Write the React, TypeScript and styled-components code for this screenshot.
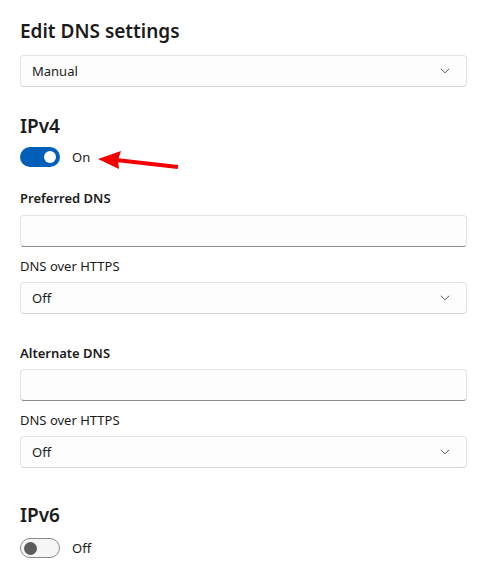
import React from "react";
import styled, { createGlobalStyle } from "styled-components";

const Global = createGlobalStyle`
  html, body { margin: 0; padding: 0; background: #ffffff; }
  body { font-family: "Segoe UI", "Noto Sans", "Open Sans", sans-serif; color: #1b1b1b; }
  * { box-sizing: border-box; }
`;

const Page = styled.div`
  position: relative;
  width: 477px;
  height: 577px;
  padding: 17px 10px 0 20px;
  display: flex;
  flex-direction: column;
  overflow: hidden;
`;

const Heading = styled.div<{ $mt?: number }>`
  font-size: 19px;
  font-weight: 600;
  line-height: 28px;
  height: 28px;
  margin-top: ${(p) => p.$mt ?? 0}px;
`;

const Label = styled.div<{ $mt: number; $bold?: boolean }>`
  font-size: 13px;
  line-height: 20px;
  height: 20px;
  font-weight: ${(p) => (p.$bold ? 600 : 400)};
  margin-top: ${(p) => p.$mt}px;
`;

const Select = styled.div<{ $mt: number }>`
  margin-top: ${(p) => p.$mt}px;
  height: 32px;
  border: 1px solid #e3e3e3;
  border-bottom-color: #d4d4d4;
  border-radius: 4px;
  background: #fdfdfd;
  display: flex;
  align-items: center;
  justify-content: space-between;
  padding: 0 16px 0 11px;
  font-size: 13px;
`;

const Input = styled.div<{ $mt: number }>`
  margin-top: ${(p) => p.$mt}px;
  height: 32px;
  border: 1px solid #e3e3e3;
  border-bottom: 1px solid #8a8a8a;
  border-radius: 4px;
  background: #fdfdfd;
`;

const ToggleRow = styled.div<{ $mt: number }>`
  margin-top: ${(p) => p.$mt}px;
  height: 20px;
  display: flex;
  align-items: center;
  gap: 12px;
  font-size: 13px;
`;

const Track = styled.div<{ $on: boolean }>`
  width: 40px;
  height: 20px;
  border-radius: 10px;
  display: flex;
  align-items: center;
  padding: 0 ${(p) => (p.$on ? 4 : 3)}px;
  justify-content: ${(p) => (p.$on ? "flex-end" : "flex-start")};
  background: ${(p) => (p.$on ? "#005fb8" : "#f6f6f6")};
  border: ${(p) => (p.$on ? "none" : "1px solid #8a8a8a")};
`;

const Knob = styled.div<{ $on: boolean }>`
  width: ${(p) => (p.$on ? 12 : 13)}px;
  height: ${(p) => (p.$on ? 12 : 13)}px;
  border-radius: 50%;
  background: ${(p) => (p.$on ? "#ffffff" : "#5d5d5d")};
`;

const Arrow = styled.svg`
  position: absolute;
  left: 94px;
  top: 148px;
`;

const Chevron = () => (
  <svg width="10" height="6" viewBox="0 0 10 6">
    <path d="M0.8 0.8 L5 4.8 L9.2 0.8" fill="none" stroke="#606060" strokeWidth="1" />
  </svg>
);

const Toggle = ({ on, mt }: { on: boolean; mt: number }) => (
  <ToggleRow $mt={mt}>
    <Track $on={on}>
      <Knob $on={on} />
    </Track>
    <span>{on ? "On" : "Off"}</span>
  </ToggleRow>
);

export default function App() {
  return (
    <>
      <Global />
      <Page>
        <Heading>Edit DNS settings</Heading>
        <Select $mt={10}>
          <span>Manual</span>
          <Chevron />
        </Select>

        <Heading $mt={25}>IPv4</Heading>
        <Toggle on mt={7} />

        <Label $mt={21} $bold>Preferred DNS</Label>
        <Input $mt={7} />
        <Label $mt={9}>DNS over HTTPS</Label>
        <Select $mt={6}>
          <span>Off</span>
          <Chevron />
        </Select>

        <Label $mt={29} $bold>Alternate DNS</Label>
        <Input $mt={6} />
        <Label $mt={9}>DNS over HTTPS</Label>
        <Select $mt={6}>
          <span>Off</span>
          <Chevron />
        </Select>

        <Heading $mt={33}>IPv6</Heading>
        <Toggle on={false} mt={9} />

        <Arrow width="90" height="26" viewBox="0 0 90 26">
          <path d="M84 19 L22 12" stroke="#f20000" strokeWidth="4" strokeLinecap="butt" />
          <path d="M4 11 L27 3 L24 12 L25 21 Z" fill="#f20000" />
        </Arrow>
      </Page>
    </>
  );
}
